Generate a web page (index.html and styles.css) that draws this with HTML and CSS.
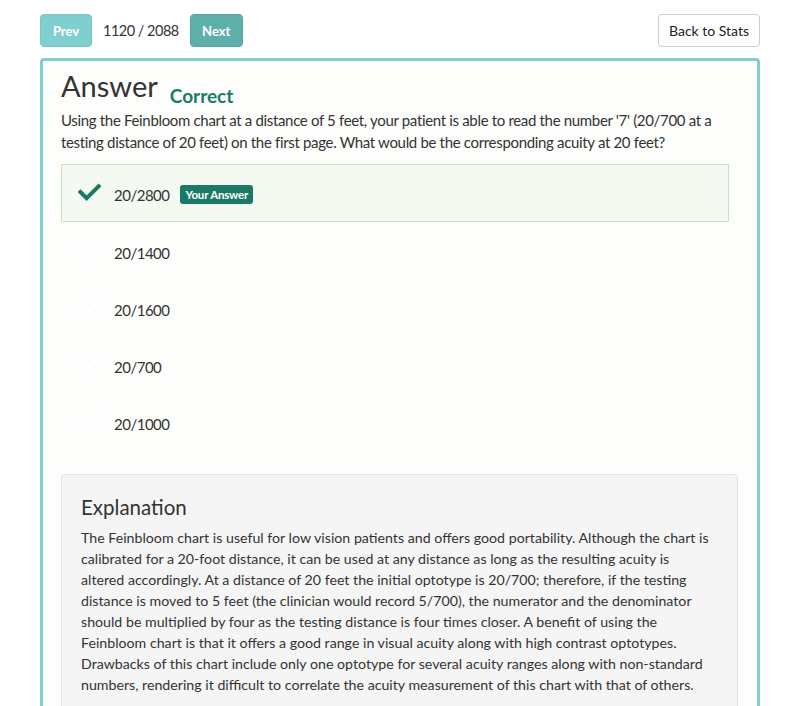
FILE: index.html
```html
<!DOCTYPE html>
<html>
<head>
<meta charset="utf-8">
<link rel="stylesheet" href="styles.css">
</head>
<body>
<div class="topbar">
  <div class="nav">
    <button class="btn btn-prev">Prev</button>
    <span class="counter">1120 / 2088</span>
    <button class="btn btn-next">Next</button>
  </div>
  <button class="btn btn-back">Back to Stats</button>
</div>
<div class="card">
  <div class="title-row">
    <h1 class="title">Answer</h1>
    <span class="status">Correct</span>
  </div>
  <p class="question">Using the Feinbloom chart at a distance of 5 feet, your patient is able to read the number '7' (20/700 at a testing distance of 20 feet) on the first page. What would be the corresponding acuity at 20 feet?</p>
  <ul class="options">
    <li class="option selected">
      <svg class="check" viewBox="0 0 24 24"><path d="M2.5 12.5 L9 19 L21.5 6.5" fill="none" stroke="currentColor" stroke-width="4.2" stroke-linecap="square" stroke-linejoin="miter"/></svg>
      <span class="opt-text">20/2800</span>
      <span class="badge">Your Answer</span>
    </li>
    <li class="option">
      <svg class="check faint" viewBox="0 0 24 24"><path d="M2.5 12.5 L9 19 L21.5 6.5" fill="none" stroke="currentColor" stroke-width="4.2" stroke-linecap="square"/></svg>
      <span class="opt-text">20/1400</span>
    </li>
    <li class="option">
      <svg class="check faint" viewBox="0 0 24 24"><path d="M2.5 12.5 L9 19 L21.5 6.5" fill="none" stroke="currentColor" stroke-width="4.2" stroke-linecap="square"/></svg>
      <span class="opt-text">20/1600</span>
    </li>
    <li class="option">
      <svg class="check faint" viewBox="0 0 24 24"><path d="M2.5 12.5 L9 19 L21.5 6.5" fill="none" stroke="currentColor" stroke-width="4.2" stroke-linecap="square"/></svg>
      <span class="opt-text">20/700</span>
    </li>
    <li class="option">
      <svg class="check faint" viewBox="0 0 24 24"><path d="M2.5 12.5 L9 19 L21.5 6.5" fill="none" stroke="currentColor" stroke-width="4.2" stroke-linecap="square"/></svg>
      <span class="opt-text">20/1000</span>
    </li>
  </ul>
  <div class="well">
    <h2 class="well-title">Explanation</h2>
    <p class="well-text">The Feinbloom chart is useful for low vision patients and offers good portability. Although the chart is calibrated for a 20-foot distance, it can be used at any distance as long as the resulting acuity is altered accordingly. At a distance of 20 feet the initial optotype is 20/700; therefore, if the testing distance is moved to 5 feet (the clinician would record 5/700), the numerator and the denominator should be multiplied by four as the testing distance is four times closer. A benefit of using the Feinbloom chart is that it offers a good range in visual acuity along with high contrast optotypes. Drawbacks of this chart include only one optotype for several acuity ranges along with non-standard numbers, rendering it difficult to correlate the acuity measurement of this chart with that of others.</p>
  </div>
</div>
</body>
</html>
```

FILE: styles.css
```css
* { box-sizing: border-box; }
html, body { margin: 0; padding: 0; background: #ffffff; }
body {
  font-family: Lato, "Open Sans", sans-serif;
  color: #333333;
  overflow: hidden;
  height: 706px;
}
.topbar {
  display: flex;
  justify-content: space-between;
  align-items: center;
  padding: 14px 40px 11px 40px;
}
.nav { display: flex; align-items: center; gap: 11px; }
.btn {
  font-family: inherit;
  height: 33px;
  border-radius: 4px;
  border: 1px solid transparent;
  padding: 0 12px;
  cursor: pointer;
}
.btn-prev {
  background: #7fcfcf;
  border-color: #78c6c6;
  color: #ffffff;
  font-weight: 700;
  font-size: 13px;
  width: 52px;
  padding: 0;
}
.btn-next {
  background: #5eaeaa;
  border-color: #58a6a2;
  color: #ffffff;
  font-weight: 700;
  font-size: 13px;
  width: 53px;
  padding: 0;
}
.counter { font-size: 14.5px; letter-spacing: -0.5px; color: #333; }
.btn-back {
  background: #ffffff;
  border-color: #cccccc;
  color: #222;
  font-size: 14px;
  width: 102px;
  padding: 0;
}
.card {
  margin: 0 40px;
  border: 3px solid #7fcfcf;
  border-radius: 4px;
  background: #fdfdfb;
  padding: 7px 19px 40px 18px;
  height: 700px;
}
.title-row { display: flex; align-items: flex-end; gap: 12px; }
.title {
  margin: 0;
  font-size: 29px;
  font-weight: 400;
  line-height: 36px;
  color: #333;
}
.status {
  font-size: 19px;
  font-weight: 700;
  color: #1a7a66;
  line-height: 24px;
  margin-bottom: -4px;
}
.question {
  margin: 5px 0 11px 0;
  font-size: 15px;
  letter-spacing: -0.33px;
  line-height: 22px;
}
.options { list-style: none; margin: 0 9px 0 0; padding: 0; }
.option {
  display: flex;
  align-items: center;
  height: 57px;
  border: 1px solid transparent;
  padding: 0 0 0 16px;
  font-size: 15px;
  letter-spacing: -0.5px;
}
.option.selected {
  background: #f4faf1;
  border-color: #c6e5bd;
  height: 58px;
}
.check { width: 23px; height: 23px; color: #1a7a66; margin-right: 13px; margin-top: -3px; }
.check.faint { color: #ffffff; }
.opt-text { padding-top: 4px; }
.badge {
  background: #1a7a66;
  color: #fff;
  font-size: 11.5px;
  font-weight: 700;
  letter-spacing: -0.2px;
  padding: 3px 5px;
  border-radius: 3px;
  margin-left: 11px;
  margin-top: 3px;
  line-height: 13px;
}
.well {
  margin-top: 24px;
  background: #f5f5f5;
  border: 1px solid #e3e3e3;
  border-radius: 4px;
  padding: 18px 19px 19px 19px;
}
.well-title {
  margin: 0 0 6px 0;
  font-size: 20.5px;
  font-weight: 400;
  line-height: 28px;
  color: #333;
}
.well-text {
  margin: 0;
  max-width: 632px;
  font-size: 14.2px;
  line-height: 21px;
  color: #333;
}
```
